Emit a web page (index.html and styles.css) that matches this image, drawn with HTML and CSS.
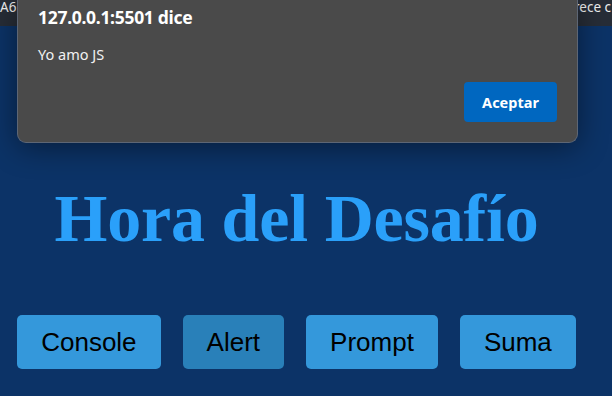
FILE: index.html
```html
<!DOCTYPE html>
<html lang="es">
<head>
<meta charset="utf-8">
<title>Hora del Desafío</title>
<link rel="stylesheet" href="styles.css">
</head>
<body>
<div class="bar">
  <span class="bar-left">A6</span>
  <span class="bar-right">rece c</span>
</div>
<main class="page">
  <h1 class="title">Hora del Desafío</h1>
  <div class="buttons">
    <button class="btn">Console</button>
    <button class="btn btn-active">Alert</button>
    <button class="btn">Prompt</button>
    <button class="btn">Suma</button>
  </div>
</main>
<div class="dialog">
  <div class="dialog-title">127.0.0.1:5501 dice</div>
  <div class="dialog-msg">Yo amo JS</div>
  <div class="dialog-actions">
    <button class="dialog-ok">Aceptar</button>
  </div>
</div>
</body>
</html>
```

FILE: styles.css
```css
html, body {
  margin: 0;
  padding: 0;
}
body {
  width: 612px;
  height: 396px;
  overflow: hidden;
  background: #0c3367;
  font-family: "Liberation Sans", Arial, sans-serif;
}
.bar {
  height: 26px;
  background: #272d37;
  color: #f0f0f0;
  font-family: "Noto Sans", "Open Sans", sans-serif;
  font-size: 13.5px;
  line-height: 14px;
  display: flex;
  white-space: nowrap;
}
.bar-left {
  margin-left: 0;
}
.bar-right {
  margin-left: auto;
  margin-right: 1px;
  flex-shrink: 0;
}
.page {
  width: 593px;
  padding-top: 155px;
}
.title {
  margin: 0;
  text-align: center;
  font-family: "Liberation Serif", "Times New Roman", serif;
  font-weight: bold;
  font-size: 68px;
  line-height: 75px;
  letter-spacing: -0.2px;
  color: #2aa0fa;
}
.buttons {
  margin-top: 59px;
  display: flex;
  justify-content: center;
  gap: 22px;
}
.btn {
  border: none;
  border-radius: 5px;
  background: #3498db;
  color: #000;
  font-family: "Liberation Sans", Arial, sans-serif;
  font-size: 26px;
  line-height: 30px;
  padding: 12px 24px;
}
.btn-active {
  background: #2980b9;
}
.dialog {
  position: absolute;
  left: 17px;
  top: -1px;
  width: 561px;
  height: 144px;
  background: #4a4a4a;
  border: 1px solid #5d6675;
  border-top: none;
  border-radius: 0 0 9px 9px;
  box-shadow: 0 4px 30px rgba(0, 0, 0, 0.45);
  font-family: "Noto Sans", "Open Sans", sans-serif;
  color: #fff;
  box-sizing: border-box;
  padding: 5px 20px 0 20px;
  display: flex;
  flex-direction: column;
}
.dialog-title {
  font-weight: bold;
  font-size: 17.5px;
  line-height: 26px;
  letter-spacing: -0.3px;
}
.dialog-msg {
  margin-top: 14px;
  font-size: 14.5px;
  line-height: 20px;
  color: #f2f2f2;
}
.dialog-actions {
  margin-top: 18px;
  display: flex;
  justify-content: flex-end;
}
.dialog-ok {
  width: 93px;
  height: 40px;
  border: none;
  border-radius: 4px;
  background: #0067c0;
  color: #fff;
  font-family: "Noto Sans", "Open Sans", sans-serif;
  font-weight: bold;
  font-size: 14.5px;
}
```
